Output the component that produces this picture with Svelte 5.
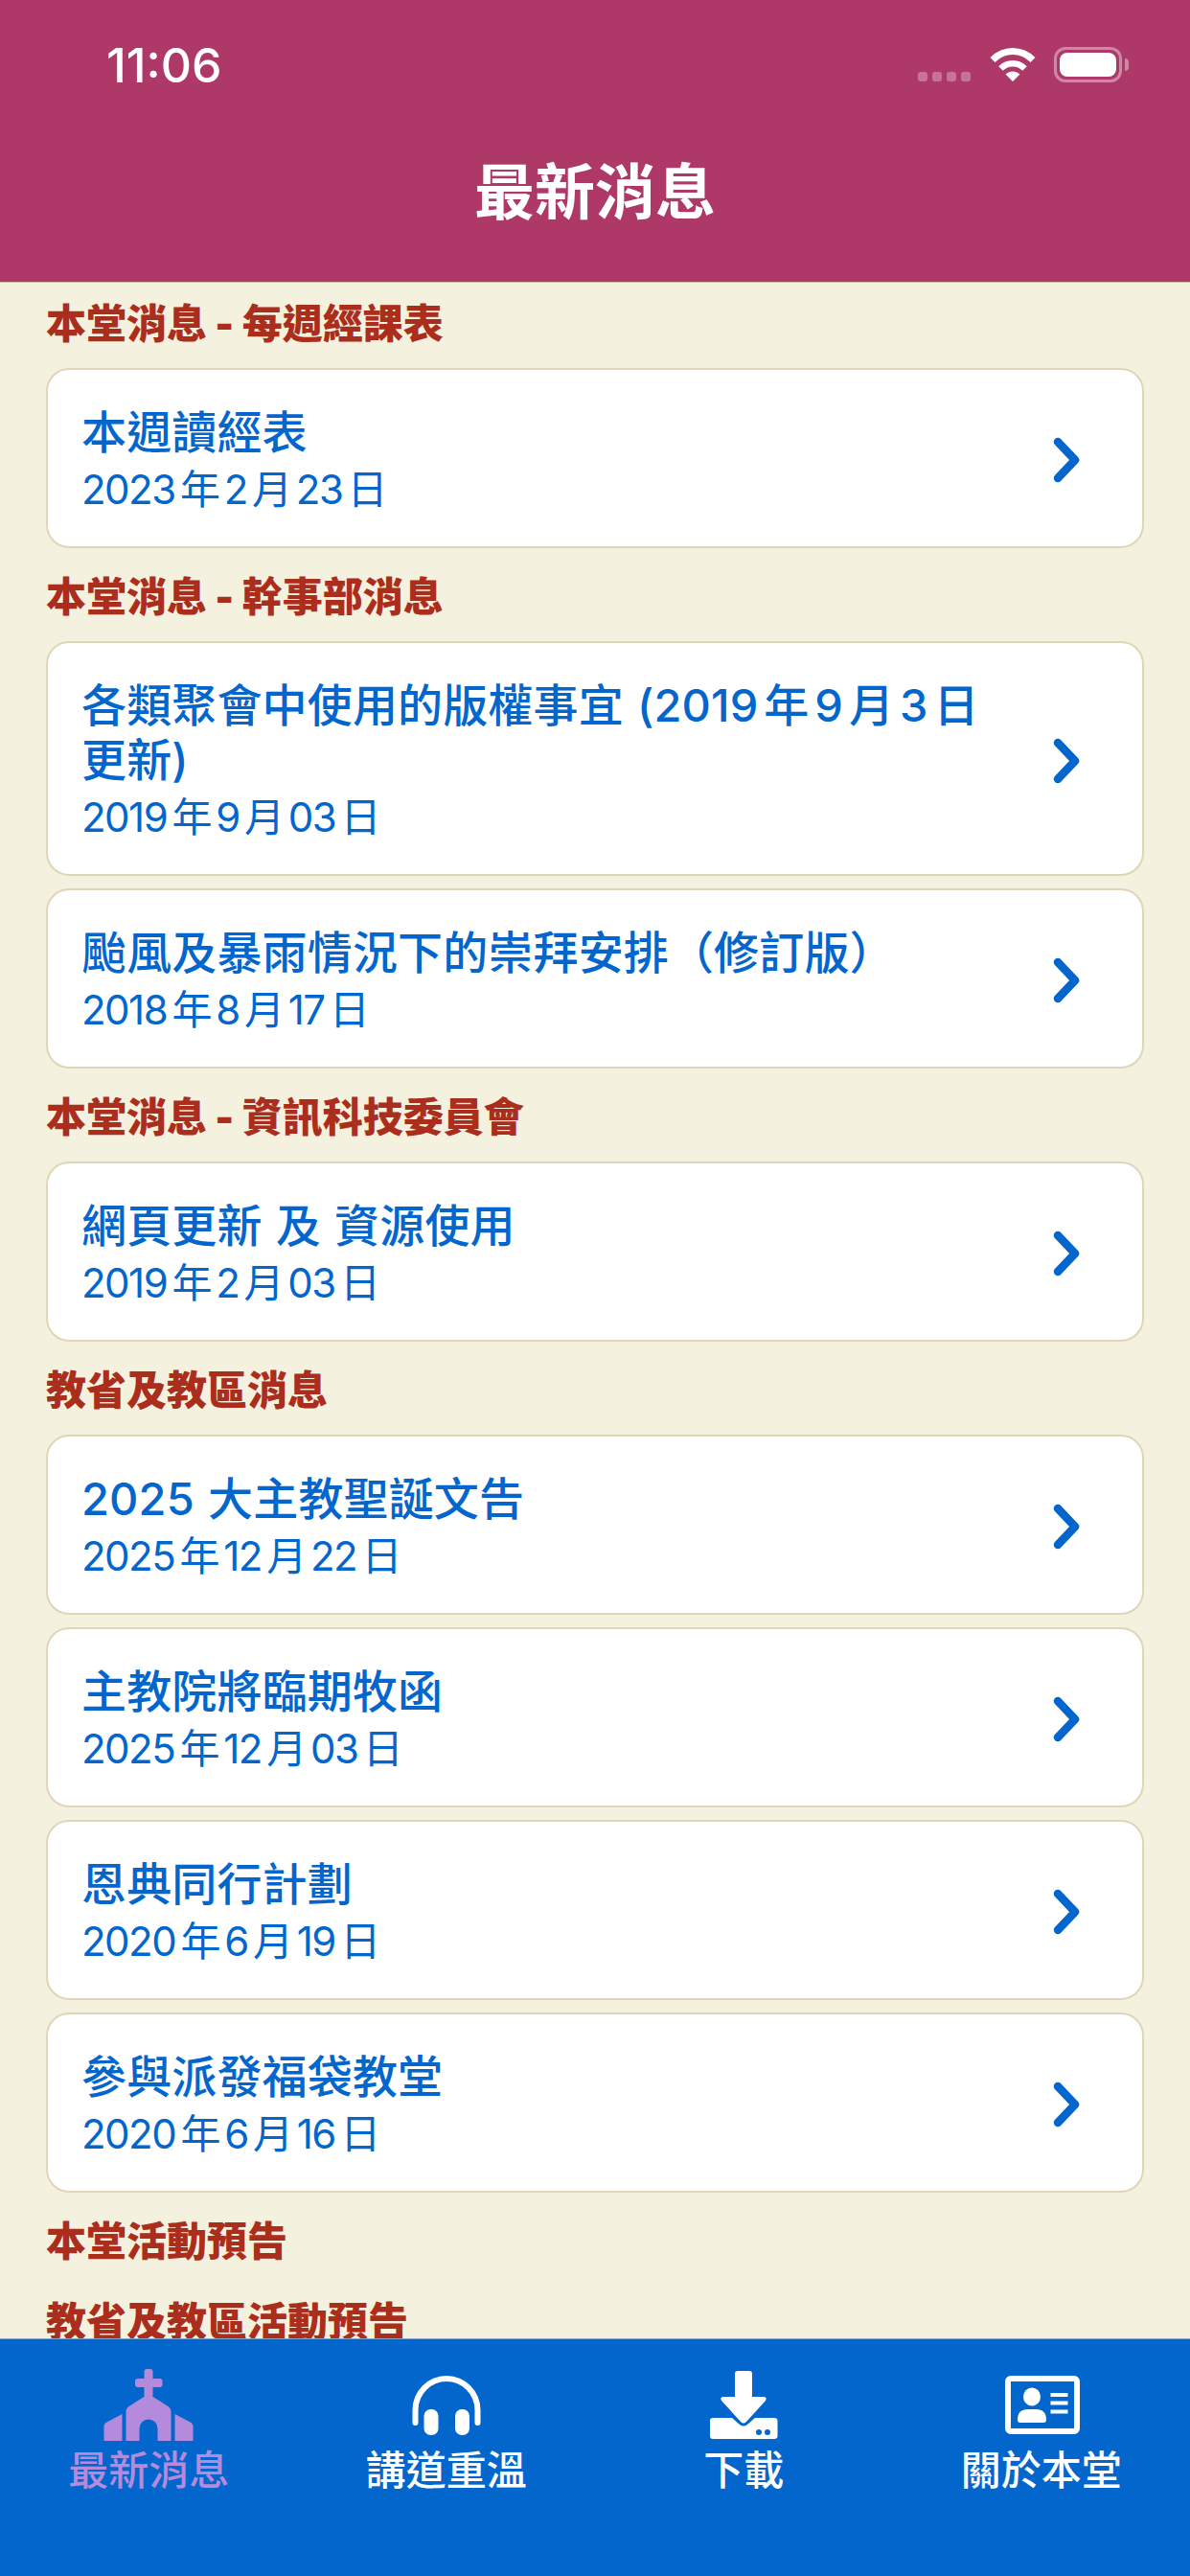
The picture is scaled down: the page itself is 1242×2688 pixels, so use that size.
<script>
  const sections = [
    { title: '本堂消息 - 每週經課表', items: [{ title: '本週讀經表', date: '2023年2月23日' }] },
    {
      title: '本堂消息 - 幹事部消息',
      items: [
        { title: '各類聚會中使用的版權事宜 (2019年9月3日更新)', date: '2019年9月03日' },
        { title: '颱風及暴雨情況下的崇拜安排（修訂版）', date: '2018年8月17日' }
      ]
    },
    { title: '本堂消息 - 資訊科技委員會', items: [{ title: '網頁更新 及 資源使用', date: '2019年2月03日' }] },
    {
      title: '教省及教區消息',
      items: [
        { title: '2025 大主教聖誕文告', date: '2025年12月22日' },
        { title: '主教院將臨期牧函', date: '2025年12月03日' },
        { title: '恩典同行計劃', date: '2020年6月19日' },
        { title: '參與派發福袋教堂', date: '2020年6月16日' }
      ]
    },
    { title: '本堂活動預告', items: [] },
    { title: '教省及教區活動預告', items: [] }
  ];
</script>

<div class="screen">
  <header class="header">
    <div class="status">
      <span class="time">11:06</span>
      <div class="status-icons">
        <div class="dots"><i></i><i></i><i></i><i></i></div>
        <svg class="wifi" width="48" height="37" viewBox="0 0 48 37" fill="none" stroke="#fff">
          <path d="M3 13.5C15 1.5 33 1.5 45 13.5" stroke-width="7" />
          <path d="M11.5 22.5C18.5 15.5 29.500 15.5 36.500 22.500" stroke-width="6.500" />
          <path d="M16.500 28.500L24 36L31.500 28.500C27 24.500 21 24.500 16.500 28.500Z" fill="#fff" stroke="none" />
        </svg>
        <div class="battery">
          <div class="battery-body"><div class="battery-fill"></div></div>
          <div class="battery-nub"></div>
        </div>
      </div>
    </div>
    <h1 class="header-title">最新消息</h1>
  </header>

  <main class="list">
    {#each sections as section}
      <h2 class="section-title">{section.title}</h2>
      {#if section.items.length}
        <div class="cards">
          {#each section.items as item}
            <div class="card">
              <div class="card-text">
                <div class="card-title">{item.title}</div>
                <div class="card-date">{item.date}</div>
              </div>
              <svg class="chevron" width="36" height="52" viewBox="0 0 36 52" fill="none">
                <path d="M8 7L26 26L8 45" stroke="#0366cc" stroke-width="8.500" stroke-linecap="round" stroke-linejoin="round" />
              </svg>
            </div>
          {/each}
        </div>
      {/if}
    {/each}
  </main>

  <nav class="tabs">
    <div class="tab active">
      <svg width="100" height="76" viewBox="0 0 100 76" fill="#b48bdc">
        <rect x="45.500" y="0" width="9" height="30" rx="3" />
        <rect x="36" y="10" width="28.500" height="9" rx="3" />
        <path d="M50 26L70.500 39Q73.500 41 73.500 44V75H59.500V62A9.500 9.500 0 0 0 40.500 62V75H26.500V44Q26.500 41 29.500 39Z" />
        <path d="M22.500 47V75H3.500V60Q3.500 57 6.500 55.500Z" />
        <path d="M77.500 47L93.500 55.500Q96.500 57 96.500 60V75H77.500Z" />
      </svg>
      <span>最新消息</span>
    </div>
    <div class="tab">
      <svg width="100" height="76" viewBox="0 0 100 76" fill="#fff">
        <path d="M17.500 56V43A32.500 33 0 0 1 82.500 43V56" fill="none" stroke="#fff" stroke-width="6" stroke-linecap="round" />
        <rect x="26.500" y="42" width="15" height="27" rx="7" />
        <rect x="59" y="42" width="15" height="27" rx="7" />
      </svg>
      <span>講道重溫</span>
    </div>
    <div class="tab">
      <svg width="100" height="76" viewBox="0 0 100 76" fill="#fff">
        <path d="M44 2H56Q59 2 59 5V29H71Q75 29 73 33L53 55Q50 58 47 55L27 33Q25 29 29 29H41V5Q41 2 44 2Z" />
        <path d="M18 51H38L46 58Q50 61 54 58L62 51H82Q85.500 51 85.500 54V70Q85.500 73 82 73H18Q15 73 15 70V54Q15 51 18 51Z" />
        <circle cx="66" cy="66" r="3" fill="#0366cc" />
        <circle cx="75" cy="66" r="3" fill="#0366cc" />
      </svg>
      <span>下載</span>
    </div>
    <div class="tab">
      <svg width="100" height="76" viewBox="0 0 100 76" fill="#fff">
        <rect x="15" y="10" width="72" height="55" rx="3" fill="none" stroke="#fff" stroke-width="6" />
        <ellipse cx="40" cy="29" rx="9" ry="9.500" />
        <path d="M25 53Q25 42 36 42H44Q55 42 55 53Q55 56 52 56H28Q25 56 25 53Z" />
        <rect x="59.500" y="25" width="18" height="4" />
        <rect x="59.500" y="33.500" width="18" height="4" />
        <rect x="59.500" y="42.500" width="18" height="4" />
      </svg>
      <span>關於本堂</span>
    </div>
  </nav>
</div>

<style>
  :global(body) {
    margin: 0;
  }

  .screen {
    width: 1242px;
    height: 2688px;
    display: flex;
    flex-direction: column;
    overflow: hidden;
    background: #f5f1df;
    font-family: Inter, "Noto Sans CJK TC", sans-serif;
    text-autospace: normal;
  }

  .header {
    height: 294px;
    flex: none;
    background: #ae3868;
    border-bottom: 1px solid #c9c3a0;
    color: #fff;
    box-sizing: content-box;
  }

  .status {
    height: 136px;
    display: flex;
    justify-content: space-between;
    padding: 0 64px 0 111px;
  }

  .time {
    font-size: 50px;
    font-weight: 500;
    line-height: 60px;
    margin-top: 38px;
  }

  .status-icons {
    display: flex;
    align-items: flex-start;
    padding-top: 49px;
  }

  .dots {
    display: flex;
    gap: 5px;
    margin-top: 26px;
    margin-right: 20px;
  }

  .dots i {
    width: 10px;
    height: 10px;
    border-radius: 3px;
    background: rgba(255, 255, 255, 0.3);
  }

  .battery {
    display: flex;
    align-items: center;
    margin-left: 19px;
  }

  .battery-body {
    width: 71px;
    height: 37px;
    box-sizing: border-box;
    border: 3px solid rgba(255, 255, 255, 0.4);
    border-radius: 12px;
    padding: 3px;
  }

  .battery-fill {
    height: 100%;
    background: #fff;
    border-radius: 8px;
  }

  .battery-nub {
    width: 4px;
    height: 13px;
    margin-left: 3px;
    background: rgba(255, 255, 255, 0.4);
    border-radius: 0 4px 4px 0;
  }

  .header-title {
    margin: 0;
    text-align: center;
    font-size: 63px;
    font-weight: 700;
    line-height: 128px;
  }

  .list {
    flex: 1;
    min-height: 0;
    overflow: hidden;
    padding: 0 48px;
  }

  .section-title {
    margin: 0;
    height: 84px;
    line-height: 86px;
    font-size: 42px;
    font-weight: 900;
    color: #ab2e1c;
  }

  .cards {
    display: flex;
    flex-direction: column;
    gap: 13px;
    padding: 5px 0 8px;
  }

  .card {
    display: flex;
    align-items: center;
    box-sizing: border-box;
    padding: 36px 60px 27px 35px;
    background: #fff;
    border: 2px solid #ded6b6;
    border-radius: 24px;
    color: #0366cc;
  }

  .card-text {
    flex: 1;
    min-width: 0;
    padding-right: 56px;
  }

  .card-title {
    font-size: 47px;
    font-weight: 500;
    letter-spacing: 0.15px;
    word-spacing: 1.5px;
    line-height: 57px;
  }

  .card-date {
    font-size: 42px;
    letter-spacing: -1.5px;
    line-height: 64px;
  }

  .chevron {
    flex: none;
    margin-bottom: 5px;
  }

  .tabs {
    height: 248px;
    flex: none;
    display: flex;
    box-sizing: border-box;
    padding-top: 31px;
    background: #0366cc;
    border-top: 1px solid #7fa8d4;
    color: #fff;
  }

  .tab {
    flex: 1;
    display: flex;
    flex-direction: column;
    align-items: center;
    font-size: 42px;
    font-weight: 500;
    line-height: 50px;
  }

  .tab svg {
    display: block;
  }

  .tab span {
    margin-top: 5px;
  }

  .tab.active {
    color: #b48bdc;
  }
</style>
